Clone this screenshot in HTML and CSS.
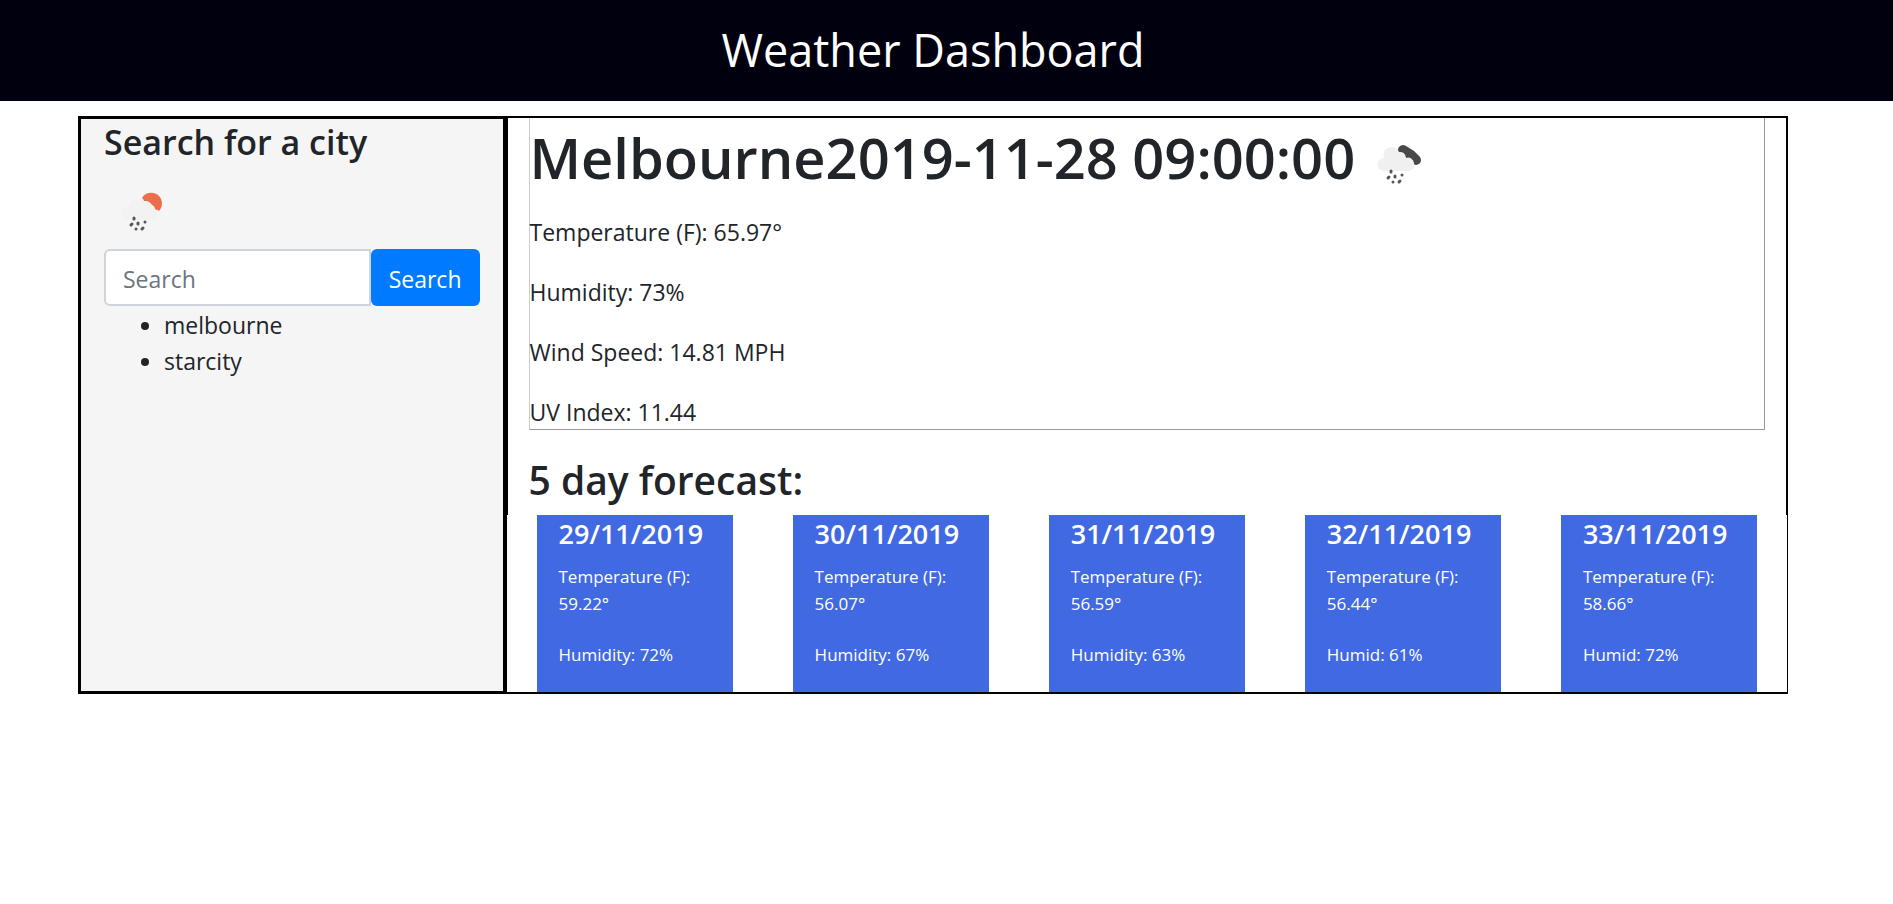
FILE: index.html
```html
<!DOCTYPE html>
<html lang="en">
<head>
<meta charset="utf-8">
<title>Weather Dashboard</title>
<link rel="stylesheet" href="styles.css">
</head>
<body>
<header class="banner"><div class="banner-title">Weather Dashboard</div></header>
<div class="page">
  <div class="board">
    <aside class="sidebar">
      <h3 class="sidebar-title">Search for a city</h3>
      <svg class="sidebar-icon" viewBox="0 0 75 75" aria-hidden="true">
        <path fill="#ec6e4c" d="M38 24C41 18 50 17 55 22C59 26 59 33 55 37Q53 35 51 36Q51 32 48 31Q45 26 40 28Q40 25 38 24Z"/>
        <path fill="#f2f2f2" d="M24 46a7 7 0 0 1 1-14a9 9 0 0 1 15-5a7 7 0 0 1 8 6a7 7 0 0 1 1 13z"/>
        <path class="drops" d="M30 44v1M28 50l-1 1M34 49v1M41 48v0M32 55v0M39 54l-1 1"/>
      </svg>
      <form class="search">
        <input class="search-input" type="text" placeholder="Search" aria-label="Search for a city">
        <button class="search-button" type="button">Search</button>
      </form>
      <ul class="history">
        <li>melbourne</li>
        <li>starcity</li>
      </ul>
    </aside>
    <main class="main">
      <div class="overview">
        <section class="current">
          <h1 class="current-title">Melbourne2019-11-28 09:00:00<svg class="current-icon" viewBox="0 0 75 75" aria-hidden="true">
            <path stroke="#484848" stroke-width="10" stroke-linecap="round" stroke-linejoin="round" fill="none" d="M42 30L50 35L55 40"/>
            <path fill="#f0f0f0" d="M23 51a6 6 0 0 1 0-13a8 8 0 0 1 15-6a6 6 0 0 1 7 6a6 6 0 0 1 8 5a6 6 0 0 1-5 8z"/>
            <path class="drops" d="M30 51v1M28 57l-1 1M34 56v1M41 55v0M32 62v0M39 61l-1 1"/>
          </svg></h1>
          <p>Temperature (F): 65.97°</p>
          <p>Humidity: 73%</p>
          <p>Wind Speed: 14.81 MPH</p>
          <p>UV Index: 11.44</p>
        </section>
        <h2 class="forecast-title">5 day forecast:</h2>
      </div>
      <section class="forecast">
        <article class="day"><h5>29/11/2019</h5><p>Temperature (F): 59.22°</p><p>Humidity: 72%</p></article>
        <article class="day"><h5>30/11/2019</h5><p>Temperature (F): 56.07°</p><p>Humidity: 67%</p></article>
        <article class="day"><h5>31/11/2019</h5><p>Temperature (F): 56.59°</p><p>Humidity: 63%</p></article>
        <article class="day"><h5>32/11/2019</h5><p>Temperature (F): 56.44°</p><p>Humid: 61%</p></article>
        <article class="day"><h5>33/11/2019</h5><p>Temperature (F): 58.66°</p><p>Humid: 72%</p></article>
      </section>
    </main>
  </div>
</div>
</body>
</html>
```
FILE: styles.css
```css
* { box-sizing: border-box; }
body {
  margin: 0;
  background: #fff;
  color: #212529;
  font-family: "Open Sans", "Noto Sans", sans-serif;
  font-size: 23px;
  line-height: 36px;
}
h1, h2, h3, h5, p, ul { margin: 0; font-weight: 600; }
p, ul { font-weight: 400; }
.banner {
  background: #00000f;
  color: #fff;
  padding: 14px 27px 15px 0;
  text-align: center;
  font-size: 45px;
  line-height: 72px;
}
.page { padding: 15px 27px 0 0; }
.board {
  display: grid;
  grid-template-columns: minmax(0, 1fr) minmax(0, 3fr);
  max-width: 1710px;
  margin: 0 auto;
}
.sidebar {
  background: #f5f5f5;
  border: 3px solid #000;
  padding: 0 23px;
}
.sidebar-title { font-size: 34px; line-height: 46px; }
.sidebar-icon { display: block; width: 75px; height: 75px; margin: 9px 0 0; }
.drops { fill: none; stroke: #555; stroke-width: 3; stroke-linecap: round; }
.search { display: flex; }
.search-input, .search-button {
  height: 57px;
  font: inherit;
  border-radius: 6px;
}
.search-input {
  flex: 1;
  width: 0;
  min-width: 0;
  border: 2px solid #ced4da;
  border-radius: 6px 0 0 6px;
  padding: 3px 17px 0;
  color: #495057;
  background: #fff;
}
.search-input::placeholder { color: #6c757d; opacity: 1; }
.search-button { border: 0; padding: 3px 18px 0; background: #007bff; color: #fff; }
.history { padding: 1px 0 0 60px; }
.main { border: solid #000; border-width: 2px 0; }
.overview { border: solid #000; border-width: 0 2px; padding: 0 21px; }
.current { border: solid #999; border-width: 0 1px 1px 0; border-left: 1px solid #ccc; }
.current-title { display: flex; align-items: center; gap: 6px; font-size: 56px; line-height: 75px; margin-bottom: 20px; padding-top: 2px; }
.current-icon { width: 75px; height: 75px; }
.current p { line-height: 34px; }
.current p + p { margin-top: 26px; }
.forecast-title { font-size: 39px; line-height: 50px; padding: 25px 0 10px; }
.forecast {
  display: grid;
  grid-template-columns: repeat(5, 1fr);
  gap: 60px;
  padding: 0 30px;
  border: solid #000;
  border-width: 0 1px;
}
.day { background: #4169e1; color: #fff; padding: 0 22px 24px; font-size: 17px; line-height: 27px; }
.day h5 { font-size: 27px; line-height: 36px; padding-top: 1px; margin-bottom: 11px; }
.day p + p { margin-top: 24px; }
```
